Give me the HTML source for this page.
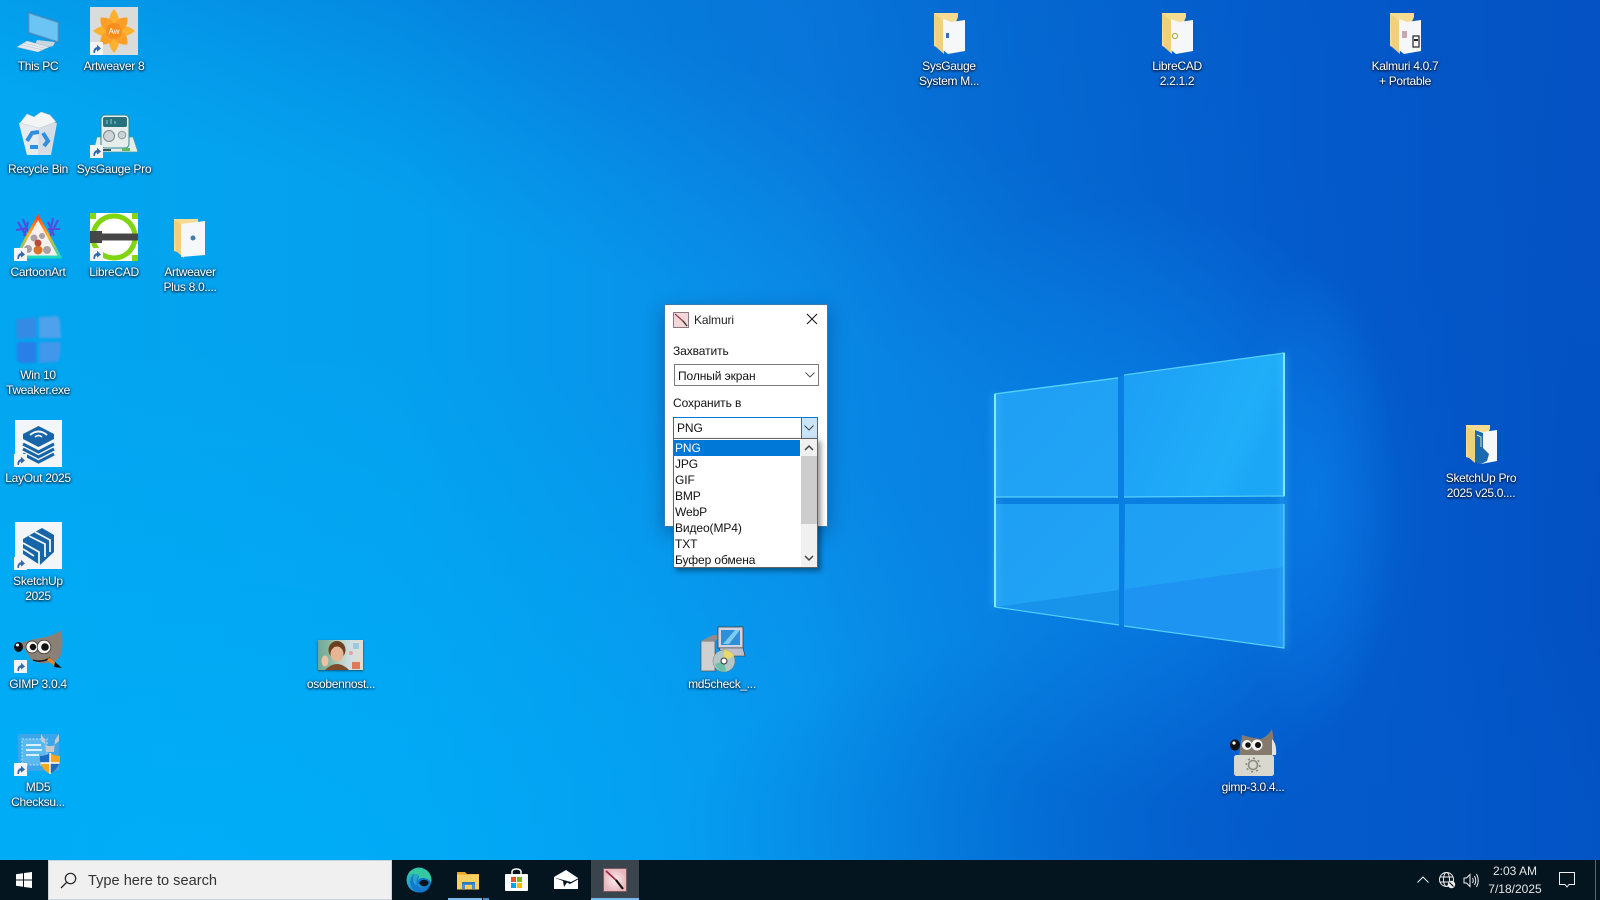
<!DOCTYPE html>
<html lang="en"><head><meta charset="utf-8"><title>Desktop</title>
<style>
*{box-sizing:border-box}
html,body{margin:0;padding:0;width:1600px;height:900px;overflow:hidden;background:#0078d7;font-family:"Liberation Sans","Noto Sans CJK SC",sans-serif;font-size:12px}
.abs{position:absolute}
svg{position:absolute;display:block}
#wp{position:absolute;left:0;top:0;width:1600px;height:900px;background:
radial-gradient(300px 300px at 1130px 500px,rgba(10,146,240,.55),rgba(10,146,240,0)),
radial-gradient(80px 240px at 1315px 500px,rgba(12,132,238,.5),rgba(12,132,238,0)),
radial-gradient(620px 230px at 1300px 830px,rgba(3,88,200,.7),rgba(3,88,200,0)),
radial-gradient(1000px 520px at 200px 860px,rgba(0,176,250,.8),rgba(0,176,250,0)),
linear-gradient(197.7deg,rgba(4,84,196,.5) 0%,rgba(4,84,196,.38) 24%,rgba(4,84,196,.12) 35%,rgba(4,84,196,0) 42%),
linear-gradient(90deg,#03a6f0 0%,#04a0ee 25%,#0a8ce8 50%,#0678dc 63%,#045ecf 82%,#0350c2 100%)}
.l{position:absolute;width:84px;text-align:center;color:#fff;font-size:12px;line-height:15px;letter-spacing:-.3px;text-shadow:0 1px 2px rgba(0,0,0,.95),0 0 3px rgba(0,20,60,.75);white-space:nowrap}
.t{position:absolute;color:#111;font-size:12px;line-height:16px;white-space:nowrap;letter-spacing:-.1px}
</style></head><body>

<!-- wallpaper -->
<div id="wp"></div>
<svg style="left:0;top:0" width="1600" height="900" viewBox="0 0 1600 900">
<defs>
<linearGradient id="p1" x1="0" y1="0" x2="1" y2="1"><stop offset="0" stop-color="#1e9ff4"/><stop offset="1" stop-color="#22a4f6"/></linearGradient>
<linearGradient id="p2" x1="0" y1="0" x2="1" y2="0.4"><stop offset="0" stop-color="#1c9ef5"/><stop offset=".8" stop-color="#20aef8"/><stop offset="1" stop-color="#1ca6f6"/></linearGradient>
<filter id="bl3" filterUnits="userSpaceOnUse" x="900" y="300" width="500" height="400"><feGaussianBlur stdDeviation="4"/></filter>
</defs>
<polygon points="995,393 1118,377 1124,375 1284,353 1284,648 1124,626 1119,625 995,607" fill="#0a7fe2"/>
<polygon points="995,393 1118,377 1118,497 995,497" fill="url(#p1)"/>
<polygon points="1124,375 1284,353 1284,496 1124,497" fill="url(#p2)"/>
<polygon points="995,504 1119,504 1119,625 995,607" fill="url(#p1)"/>
<polygon points="1125,504 1284,504 1284,648 1124,626" fill="url(#p1)"/>
<polygon points="995,607 1119,590 1119,625" fill="#1790e8" opacity=".8"/>
<polygon points="1125,589 1284,567 1284,648 1124,626" fill="#1e8ff0" opacity=".75"/>
<g fill="none" stroke="#6fe4fa" stroke-width="3" opacity=".45" filter="url(#bl3)"><line x1="1284" y1="353" x2="1284" y2="648"/><line x1="995" y1="394" x2="995" y2="607"/></g>
<g fill="none" stroke="#62dcf8" stroke-width="1.2" opacity=".85">
<polyline points="1118,378 995,394 995,497 1118,497"/>
<polyline points="995,504 995,607 1119,625"/>
<polyline points="1124,375 1284,353 1284,496 1124,497"/>
<polyline points="1284,504 1284,648 1124,626"/>
</g>
<g fill="none" stroke="#80eafc" stroke-width="2"><line x1="1284" y1="353" x2="1284" y2="496"/><line x1="995" y1="394" x2="995" y2="607"/></g>
</svg>

<!-- This PC -->
<svg style="left:16px;top:10px" width="46" height="46" viewBox="0 0 46 46">
<polygon points="21,30 39,32 37,36 28,38 19,35" fill="#c9d5df"/>
<polygon points="12,2 43,12 43,33 12,23" fill="#4f9ed4" stroke="#3a80b8" stroke-width=".8"/>
<polygon points="13.5,4 41.5,13 41.5,31 13.5,22" fill="#6cc4f4"/>
<polygon points="1,37 11,31 33,37 22,42" fill="#e4ebf0" stroke="#aebcc8" stroke-width=".5"/>
<g stroke="#b0bec8" stroke-width=".5"><line x1="5" y1="35" x2="27" y2="40"/><line x1="8" y1="33" x2="30" y2="38.5"/></g>
</svg>
<!-- Artweaver 8 -->
<div class="abs" style="left:90px;top:7px;width:48px;height:48px;background:#dadcdb"></div>
<svg style="left:90px;top:7px" width="48" height="48" viewBox="0 0 48 48">
<g fill="#fcb12e"><path d="M24 2 Q34 14 24 24 Q14 14 24 2Z"/><path d="M24 46 Q34 34 24 24 Q14 34 24 46Z"/><path d="M3 24 Q15 14 24 24 Q15 34 3 24Z"/><path d="M45 24 Q33 14 24 24 Q33 34 45 24Z"/></g>
<g fill="#fb9f26" transform="rotate(45 24 24)"><path d="M24 5 Q35 14 24 24 Q13 14 24 5Z"/><path d="M24 43 Q35 34 24 24 Q13 34 24 43Z"/><path d="M5 24 Q14 13 24 24 Q14 35 5 24Z"/><path d="M43 24 Q34 13 24 24 Q34 35 43 24Z"/></g>
<circle cx="24" cy="24" r="8" fill="#f98e20"/>
<text x="24" y="27" font-size="8" text-anchor="middle" fill="#fff" font-family="Liberation Sans">Aw</text>
</svg>
<!-- Recycle bin -->
<svg style="left:17px;top:111px" width="42" height="46" viewBox="0 0 42 46">
<polygon points="2,12 40,12 34,44 10,44" fill="#d6dde4"/>
<polygon points="2,12 22,16 21,44 10,44" fill="#e6ebf0"/>
<path d="M3 12 L10 3 L17 6 L24 1 L33 4 L39 11 L22 17 Z" fill="#f2f4f6" stroke="#c4ced6" stroke-width=".5"/>
<g fill="none" stroke="#2f8ee2" stroke-width="4"><path d="M10 30 L15 22 L22 21"/><path d="M26 22 L31 30 L27 35"/><path d="M21 36 L13 36"/></g>
</svg>
<!-- SysGauge -->
<svg style="left:92px;top:113px" width="46" height="44" viewBox="0 0 46 44">
<polygon points="5,24 41,24 46,39 1,39" fill="#e4ecec" stroke="#4a9a9a" stroke-width=".7"/>
<rect x="9" y="2" width="28" height="33" rx="4" fill="#e6eded" stroke="#2f8a92"/>
<rect x="11" y="4" width="24" height="10" rx="2" fill="#27707c"/>
<g stroke="#7fd0d0"><line x1="15" y1="11" x2="15" y2="7"/><line x1="19" y1="11" x2="19" y2="6"/><line x1="23" y1="11" x2="23" y2="8"/></g>
<circle cx="17" cy="23" r="5.5" fill="#ccd4d6" stroke="#7a8a8c"/><circle cx="30" cy="22" r="3.8" fill="#c8d2d2" stroke="#8a9a9a"/>
<rect x="30" y="35" width="8" height="3" fill="#5cb85c"/><rect x="10" y="36" width="9" height="2" fill="#2f5a60"/>
</svg>
<!-- CartoonArt -->
<svg style="left:14px;top:214px" width="48" height="46" viewBox="0 0 48 46">
<defs><linearGradient id="rb" x1="0" y1="0" x2="0" y2="1"><stop offset="0" stop-color="#ff4a1a"/><stop offset=".45" stop-color="#ffb320"/><stop offset="1" stop-color="#1ed8c0"/></linearGradient></defs>
<g fill="none" stroke="#6a34d8" stroke-width="2" opacity=".8"><path d="M4 8 L12 22 M9 5 L14 18 M14 8 L10 22 M2 16 L14 14"/><path d="M44 6 L36 22 M39 4 L36 18 M34 8 L40 22 M46 15 L34 15"/></g>
<polygon points="24,3 46,43 2,43" fill="#f7f1ee"/>
<polygon points="24,3 46,43 2,43" fill="none" stroke="url(#rb)" stroke-width="3"/>
<g fill="#7a6a76" opacity=".6"><circle cx="20" cy="24" r="3.5"/><circle cx="28" cy="22" r="3"/><circle cx="14" cy="35" r="4"/><circle cx="33" cy="36" r="4"/></g><circle cx="24" cy="36" r="4.5" fill="#d8742a"/><circle cx="24" cy="29" r="3.5" fill="#b84a3a"/>
</svg>
<!-- LibreCAD -->
<div class="abs" style="left:90px;top:213px;width:48px;height:48px;background:#fff"></div>
<svg style="left:90px;top:213px" width="48" height="48" viewBox="0 0 48 48">
<g fill="#86d612"><rect width="6" height="6"/><rect x="42" width="6" height="6"/><rect y="42" width="6" height="6"/><rect x="42" y="42" width="6" height="6"/></g>
<circle cx="24" cy="24" r="21" fill="none" stroke="#7fd60e" stroke-width="5"/>
<rect x="0" y="18" width="12" height="12" fill="#474747"/><rect x="12" y="20.5" width="36" height="7" fill="#474747"/>
</svg>
<!-- Win 10 Tweaker -->
<svg style="left:14px;top:316px;filter:blur(1px)" width="48" height="48" viewBox="0 0 48 48">
<g opacity=".85"><path d="M2 6 Q2 3 6 3 L22 1 V22 L3 23Z" fill="#3c86e4"/><path d="M25 1 L42 0 Q46 1 46 6 L47 22 H25Z" fill="#5ca2ea"/><path d="M3 26 H22 V47 L7 47 Q3 46 3 41Z" fill="#2f78e6"/><path d="M25 26 H47 L46 41 Q45 45 41 46 L25 47Z" fill="#4c94ea"/></g>
</svg>
<!-- LayOut -->
<div class="abs" style="left:15px;top:420px;width:47px;height:47px;background:#f3f6f9"></div>
<svg style="left:15px;top:420px" width="47" height="47" viewBox="0 0 47 47">
<g fill="none" stroke="#1565a8" stroke-width="3"><path d="M8 24 L23.5 32 L39 24"/><path d="M8 29 L23.5 37 L39 29"/><path d="M8 34 L23.5 42 L39 34"/></g>
<path d="M23.5 6 L39 14 V19 L23.5 27 L8 19 V14Z" fill="#1565a8"/>
<path d="M15 15 Q23.5 8 32 15" fill="none" stroke="#f3f6f9" stroke-width="2"/><path d="M20 17 Q23.5 14 27 17" fill="none" stroke="#f3f6f9" stroke-width="1.8"/>
</svg>
<!-- SketchUp -->
<div class="abs" style="left:15px;top:522px;width:47px;height:47px;background:#f3f6f9"></div>
<svg style="left:15px;top:522px" width="47" height="47" viewBox="0 0 47 47">
<path d="M27 6 L39 13 V30 L25 43 L8 32 V17Z" fill="#1565a8"/>
<g fill="none" stroke="#f3f6f9" stroke-width="1.8"><path d="M8 21 L24 30 V43"/><path d="M8 27 L19 34"/><path d="M14 14 L30 22 V35"/><path d="M20 10 L35 18 V30"/></g>
</svg>
<!-- GIMP -->
<svg style="left:14px;top:628px" width="50" height="46" viewBox="0 0 50 46">
<path d="M7 15 L20 11 Q38 9 47 2 Q50 14 47 26 Q44 34 38 34 Q24 38 16 30 Z" fill="#8b8076"/>
<path d="M19 32 Q28 35 36 30" fill="none" stroke="#111" stroke-width="1.4"/>
<path d="M34 31 L42 37" stroke="#e8872a" stroke-width="3"/><polygon points="41,34 48,40 40,39" fill="#111"/>
<ellipse cx="4.5" cy="19" rx="4.5" ry="5" fill="#111"/><circle cx="3.5" cy="17" r="1.5" fill="#fff"/>
<circle cx="18" cy="19" r="6" fill="#f3f3ef" stroke="#222" stroke-width=".7"/><circle cx="19" cy="19" r="3.2" fill="#111"/>
<circle cx="30" cy="19" r="6.8" fill="#f3f3ef" stroke="#222" stroke-width=".7"/><circle cx="31" cy="19" r="3.8" fill="#111"/>
</svg>
<!-- MD5 checksum -->
<svg style="left:17px;top:733px" width="46" height="46" viewBox="0 0 46 46">
<rect x="1" y="1" width="41" height="37" rx="2" fill="#3ca6ea"/>
<rect x="5" y="6" width="25" height="26" fill="#5ab9ef" stroke="#b8e2f8" stroke-dasharray="2 1.5"/>
<g stroke="#d8f0fc" stroke-width="2"><line x1="9" y1="12" x2="24" y2="12"/><line x1="9" y1="17" x2="25" y2="17"/><line x1="9" y1="22" x2="22" y2="22"/></g>
<path d="M24 1 L28 7 L29 19 L37 19 L38 7 L42 1 L42 8 L36 13 H31 L24 8Z" fill="#c6cacd"/>
<path d="M33 20 Q38 23 43 23 Q44 35 33 41 Q22 35 23 23 Q28 23 33 20Z" fill="#f5a81c"/>
<path d="M33 20 Q28 23 23 23 Q22.5 27 23.5 30 H33Z" fill="#1c6cc4"/><path d="M33 30 H42.5 Q40 37 33 41Z" fill="#1c6cc4"/>
<g stroke="#fff" stroke-width="1.4"><line x1="33" y1="20" x2="33" y2="41"/><line x1="23.5" y1="30" x2="42.5" y2="30"/></g>
</svg>
<!-- osobennosti image -->
<div class="abs" style="left:318px;top:640px;width:45px;height:30px;background:linear-gradient(90deg,#6fa89a 0%,#8ab7a0 25%,#bcd2c8 50%,#cfe0e4 75%,#e6dccc 100%);box-shadow:0 1px 2px rgba(0,0,0,.5)"></div>
<svg style="left:318px;top:640px" width="45" height="30" viewBox="0 0 45 30">
<ellipse cx="19" cy="10" rx="8.5" ry="9" fill="#6a4020"/><ellipse cx="19" cy="14" rx="6.5" ry="7.5" fill="#e6b596"/><path d="M7 30 Q19 18 31 30Z" fill="#7d4a2c"/><ellipse cx="7" cy="21" rx="3.5" ry="5.5" fill="#eec0a4"/>
<rect x="34" y="22" width="8" height="7" fill="#e07a5a"/><rect x="35" y="3" width="6" height="6" fill="#9ccbe0"/><circle cx="33" cy="13" r="2" fill="#e8a0a0"/>
</svg>
<!-- md5check installer -->
<svg style="left:699px;top:624px" width="48" height="50" viewBox="0 0 48 50">
<rect x="2" y="17" width="14" height="30" fill="#d0d0d0" stroke="#555" stroke-width=".7"/><polygon points="2,17 14,11 24,11 16,17" fill="#8c8c8c"/>
<rect x="19" y="3" width="25" height="21" fill="#cfd3e2" stroke="#333" stroke-width=".7"/><rect x="22" y="6" width="19" height="15" fill="#2e8ed6"/><polygon points="24,20 36,6 41,6 30,20" fill="#7ccbf0"/>
<polygon points="20,24 44,24 46,32 24,32" fill="#bcc0cc" stroke="#333" stroke-width=".6"/>
<circle cx="25" cy="37" r="11" fill="#b4c6c6" stroke="#777" stroke-width=".5"/><path d="M25 26 A11 11 0 0 1 35 32 L25 37Z" fill="#e8da6a"/><path d="M16 40 A11 11 0 0 0 27 48 L25 37Z" fill="#6cc0a8"/><circle cx="25" cy="37" r="3" fill="#fff" stroke="#333"/>
</svg>
<!-- gimp installer -->
<svg style="left:1228px;top:728px" width="50" height="50" viewBox="0 0 50 50">
<path d="M11 28 L14 7 Q24 10 33 11 Q40 8 44 1 Q47 15 44 28Z" fill="#85796e"/><path d="M44 11 Q49 16 48 27 L44 27Z" fill="#e4e4dc"/>
<ellipse cx="7" cy="17" rx="5" ry="5.5" fill="#111"/><circle cx="6" cy="15" r="1.6" fill="#fff"/>
<circle cx="19" cy="17" r="5" fill="#f3f3ef"/><circle cx="20" cy="17" r="2.8" fill="#111"/><circle cx="29" cy="17" r="5.5" fill="#f3f3ef"/><circle cx="30" cy="17" r="3" fill="#111"/>
<rect x="6" y="27" width="40" height="21" rx="2.5" fill="#d8d8cf"/>
<circle cx="25" cy="37" r="4.5" fill="none" stroke="#8a8a80" stroke-width="1.6"/><circle cx="25" cy="37" r="6.8" fill="none" stroke="#8a8a80" stroke-width="1.6" stroke-dasharray="2 3.3"/>
</svg>

<!-- folders -->
<svg style="left:174px;top:218px" width="32" height="41" viewBox="0 0 32 41"><polygon points="0,1 24,1 24,5 10,36 0,33" fill="#f6dc90"/><polygon points="0,2 2,33 10,40 10,8" fill="#f0d07a"/><polygon points="7,6 31,3 31,37 7,39" fill="#f6f7f8"/><circle cx="19" cy="20" r="2.5" fill="#477aa8"/></svg>
<svg style="left:934px;top:12px" width="32" height="43" viewBox="0 0 32 43"><polygon points="0,1 24,1 24,5 10,38 0,34" fill="#f6dc90"/><polygon points="0,2 2,35 10,42 10,9" fill="#f0d07a"/><polygon points="9,7 17,10 31,8 31,39 14,42 9,38" fill="#f6f7f8"/><rect x="12" y="21" width="3" height="5" fill="#3a6ab8"/></svg>
<svg style="left:1162px;top:12px" width="32" height="43" viewBox="0 0 32 43"><polygon points="0,1 24,1 24,5 10,38 0,34" fill="#f6dc90"/><polygon points="0,2 2,35 10,42 10,9" fill="#f0d07a"/><polygon points="9,7 17,10 31,8 31,39 14,42 9,38" fill="#f6f7f8"/><circle cx="13" cy="24" r="2.6" fill="none" stroke="#9aac3a"/></svg>
<svg style="left:1390px;top:12px" width="32" height="43" viewBox="0 0 32 43"><polygon points="0,1 24,1 24,5 10,38 0,34" fill="#f6dc90"/><polygon points="0,2 2,35 10,42 10,9" fill="#f0d07a"/><polygon points="9,7 17,10 31,8 31,39 14,42 9,38" fill="#f6f7f8"/><rect x="12" y="19" width="5" height="7" fill="#c8a8b0"/><rect x="23" y="24" width="6" height="11" fill="#fff" stroke="#222" stroke-width="1.2"/><rect x="24" y="27" width="4" height="2" fill="#222"/></svg>
<svg style="left:1466px;top:424px" width="32" height="41" viewBox="0 0 32 41"><polygon points="0,1 24,1 24,5 9,36 0,33" fill="#f6dc90"/><polygon points="0,2 2,33 9,39 9,8" fill="#f0d07a"/><polygon points="9,6 17,8 31,6 31,37 15,40 9,37" fill="#f6f7f8"/><path d="M9 6 L17 9 V24 L23 30 L21 37 L15 40 L9 37Z" fill="#1a6ab0"/><path d="M11 11 L15 13 V23" fill="none" stroke="#f6dc90"/></svg>

<!-- shortcut arrows -->
<svg width="0" height="0" style="left:0;top:0"><defs><g id="sc"><rect width="13" height="13" fill="#f4f4f4"/><path d="M3.5 11 Q3 6 7 5 V2.8 L11 6.5 L7 9.6 V7.5 Q5 7.8 5 11Z" fill="#2e68b0"/></g></defs></svg>
<svg style="left:90px;top:42px" width="13" height="13"><use href="#sc"/></svg>
<svg style="left:90px;top:145px" width="13" height="13"><use href="#sc"/></svg>
<svg style="left:14px;top:248px" width="13" height="13"><use href="#sc"/></svg>
<svg style="left:90px;top:248px" width="13" height="13"><use href="#sc"/></svg>
<svg style="left:14px;top:454px" width="13" height="13"><use href="#sc"/></svg>
<svg style="left:14px;top:557px" width="13" height="13"><use href="#sc"/></svg>
<svg style="left:14px;top:660px" width="13" height="13"><use href="#sc"/></svg>
<svg style="left:14px;top:763px" width="13" height="13"><use href="#sc"/></svg>

<!-- labels -->
<div class="l" style="left:-4px;top:59px">This PC</div>
<div class="l" style="left:72px;top:59px">Artweaver 8</div>
<div class="l" style="left:-4px;top:162px">Recycle Bin</div>
<div class="l" style="left:72px;top:162px">SysGauge Pro</div>
<div class="l" style="left:-4px;top:265px">CartoonArt</div>
<div class="l" style="left:72px;top:265px">LibreCAD</div>
<div class="l" style="left:148px;top:265px">Artweaver<br>Plus 8.0....</div>
<div class="l" style="left:-4px;top:368px">Win 10<br>Tweaker.exe</div>
<div class="l" style="left:-4px;top:471px">LayOut 2025</div>
<div class="l" style="left:-4px;top:574px">SketchUp<br>2025</div>
<div class="l" style="left:-4px;top:677px">GIMP 3.0.4</div>
<div class="l" style="left:-4px;top:780px">MD5<br>Checksu...</div>
<div class="l" style="left:299px;top:677px">osobennost...</div>
<div class="l" style="left:680px;top:677px">md5check_...</div>
<div class="l" style="left:1211px;top:780px">gimp-3.0.4...</div>
<div class="l" style="left:1439px;top:471px">SketchUp Pro<br>2025 v25.0....</div>
<div class="l" style="left:907px;top:59px">SysGauge<br>System M...</div>
<div class="l" style="left:1135px;top:59px">LibreCAD<br>2.2.1.2</div>
<div class="l" style="left:1363px;top:59px">Kalmuri 4.0.7<br>+ Portable</div>

<!-- dialog -->
<div class="abs" style="left:664px;top:304px;width:164px;height:223px;background:#fff;border:1px solid #3a7ab4;box-shadow:0 6px 18px rgba(0,30,70,.38)"></div>
<svg style="left:673px;top:312px" width="16" height="16" viewBox="0 0 16 16"><rect x=".5" y=".5" width="15" height="15" fill="#f3d6d8" stroke="#8a7a80"/><path d="M2 2 L11 10" stroke="#9a3a4a" stroke-width="1.2"/><path d="M10 9 L14 14" stroke="#333" stroke-width="1.4"/></svg>
<div class="t" style="left:694px;top:312px;color:#222">Kalmuri</div>
<svg style="left:806px;top:313px" width="12" height="12" viewBox="0 0 12 12"><path d="M1 1 L11 11 M11 1 L1 11" stroke="#111" stroke-width="1"/></svg>
<div class="t" style="left:673px;top:343px">Захватить</div>
<div class="abs" style="left:674px;top:364px;width:145px;height:22px;background:#fff;border:1px solid #7a7a7a"></div>
<div class="t" style="left:678px;top:368px">Полный экран</div>
<svg style="left:805px;top:372px" width="10" height="6" viewBox="0 0 10 6"><path d="M.5 .5 L5 5 L9.5 .5" fill="none" stroke="#555"/></svg>
<div class="t" style="left:673px;top:395px">Сохранить в</div>
<div class="abs" style="left:673px;top:417px;width:145px;height:22px;background:#fff;border:1px solid #0078d7"></div>
<div class="abs" style="left:801px;top:417px;width:17px;height:22px;background:#cce4f7;border:1px solid #0078d7"></div>
<div class="t" style="left:677px;top:420px">PNG</div>
<svg style="left:804px;top:425px" width="10" height="6" viewBox="0 0 10 6"><path d="M.5 .5 L5 5 L9.5 .5" fill="none" stroke="#444"/></svg>
<!-- dropdown -->
<div class="abs" style="left:673px;top:438px;width:145px;height:130px;background:#fff;border:1px solid #646464;box-shadow:3px 3px 5px rgba(0,0,0,.4)"></div>
<div class="abs" style="left:674px;top:440px;width:126px;height:16px;background:#0078d7"></div>
<div class="t" style="left:675px;top:440px;color:#fff">PNG</div>
<div class="t" style="left:675px;top:456px">JPG</div>
<div class="t" style="left:675px;top:472px">GIF</div>
<div class="t" style="left:675px;top:488px">BMP</div>
<div class="t" style="left:675px;top:504px">WebP</div>
<div class="t" style="left:675px;top:520px">Видео(MP4)</div>
<div class="t" style="left:675px;top:536px">TXT</div>
<div class="t" style="left:675px;top:552px">Буфер обмена</div>
<div class="abs" style="left:801px;top:439px;width:16px;height:128px;background:#f0f0f0"></div>
<div class="abs" style="left:801px;top:456px;width:16px;height:68px;background:#cdcdcd"></div>
<svg style="left:804px;top:444px" width="10" height="7" viewBox="0 0 10 7"><path d="M1 6 L5 2 L9 6" fill="none" stroke="#444" stroke-width="1.5"/></svg>
<svg style="left:804px;top:555px" width="10" height="7" viewBox="0 0 10 7"><path d="M1 1 L5 5 L9 1" fill="none" stroke="#444" stroke-width="1.5"/></svg>

<!-- taskbar -->
<div class="abs" style="left:0;top:860px;width:1600px;height:40px;background:#04151f"></div>
<svg style="left:16px;top:872px" width="16" height="16" viewBox="0 0 16 16"><g fill="#fff"><polygon points="0,2.2 7,1.2 7,7.5 0,7.5"/><polygon points="8,1 16,0 16,7.5 8,7.5"/><polygon points="0,8.5 7,8.5 7,14.8 0,13.8"/><polygon points="8,8.5 16,8.5 16,16 8,15"/></g></svg>
<div class="abs" style="left:48px;top:860px;width:344px;height:40px;background:#f0f0f0;border:1px solid #c9d4da"></div>
<svg style="left:60px;top:872px" width="17" height="17" viewBox="0 0 17 17"><circle cx="10.5" cy="6.5" r="5.2" fill="none" stroke="#222" stroke-width="1.2"/><line x1="6.8" y1="10.2" x2="1" y2="16" stroke="#222" stroke-width="1.3"/></svg>
<div class="abs" style="left:88px;top:872px;font-size:14.6px;line-height:18px;color:#333;white-space:nowrap">Type here to search</div>

<!-- taskbar active + underlines -->
<div class="abs" style="left:591px;top:860px;width:48px;height:40px;background:#39444c"></div>
<div class="abs" style="left:448px;top:898px;width:34px;height:2px;background:#7ab8ec"></div>
<div class="abs" style="left:483px;top:898px;width:6px;height:2px;background:#4a8cc4"></div>
<div class="abs" style="left:591px;top:898px;width:48px;height:2px;background:#7ab8ec"></div>
<!-- edge -->
<svg style="left:406px;top:867px" width="26" height="26" viewBox="0 0 26 26"><defs><linearGradient id="e1" x1="0" y1="0" x2="1" y2="1"><stop offset="0" stop-color="#33c6a0"/><stop offset=".5" stop-color="#1f9ed8"/><stop offset="1" stop-color="#0f62b8"/></linearGradient></defs><circle cx="13" cy="13" r="12.5" fill="url(#e1)"/><path d="M25.5 14 Q25 8 18 8 Q11 8 10.5 14 Q10 21 18 22 Q21 22.5 23 21 Q19 26 13 25.5 Q5 24 4 15 Q5 9 9 6 Q5 13 9 18" fill="#1478cc"/><path d="M11 16 Q12 10 18 11 Q23 12 25 15 L25.5 13 Q25 3 14 1 Q4 1 1 11 Q3 6 10 7 Q15 8 12 12Z" fill="#35c9a0"/><ellipse cx="18" cy="16" rx="4.6" ry="3.2" fill="#04151f"/></svg>
<!-- explorer -->
<svg style="left:457px;top:871px" width="23" height="19" viewBox="0 0 23 19"><path d="M0 1 H8 L10 3 H22 V4 H0Z" fill="#e8a920"/><rect y="3.5" width="22" height="15" fill="#f9cf60"/><path d="M5 18 V11 H18 V18 H15 V14 H8 V18Z" fill="#4a8ec8"/><rect x="5" y="11" width="13" height="2" fill="#2f78bc"/></svg>
<!-- store -->
<svg style="left:505px;top:868px" width="23" height="24" viewBox="0 0 23 24"><path d="M7 7 V4 Q7 1 11.5 1 Q16 1 16 4 V7" fill="none" stroke="#fff" stroke-width="1.5"/><rect y="6" width="23" height="17" rx="1" fill="#fff"/><rect x="6" y="9" width="5" height="5" fill="#f25022"/><rect x="12" y="9" width="5" height="5" fill="#7fba00"/><rect x="6" y="15" width="5" height="5" fill="#00a4ef"/><rect x="12" y="15" width="5" height="5" fill="#ffb900"/></svg>
<!-- mail -->
<svg style="left:554px;top:870px" width="24" height="20" viewBox="0 0 24 20"><polygon points="12,0 24,8 24,19 0,19 0,7" fill="#fff"/><polygon points="0,7.5 17,12 24,8.5 24,9.5 16,14 13,12.5 10,17 9,11" fill="#04151f"/></svg>
<!-- kalmuri -->
<svg style="left:603px;top:868px" width="24" height="24" viewBox="0 0 24 24"><defs><radialGradient id="k"><stop offset="0" stop-color="#fbeef0"/><stop offset="1" stop-color="#e8b6bc"/></radialGradient></defs><rect x=".5" y=".5" width="23" height="23" fill="url(#k)" stroke="#7a5a62"/><path d="M3 3 L14 13" stroke="#9a2a40" stroke-width="1.8"/><path d="M13 12 L20 21" stroke="#111" stroke-width="2.2"/></svg>

<!-- tray -->
<svg style="left:1417px;top:876px" width="12" height="7" viewBox="0 0 12 7"><path d="M.5 6.5 L6 1 L11.5 6.5" fill="none" stroke="#eee" stroke-width="1"/></svg>
<svg style="left:1439px;top:872px" width="17" height="17" viewBox="0 0 17 17"><g fill="none" stroke="#eee" stroke-width="1"><circle cx="7.5" cy="7.5" r="7"/><ellipse cx="7.5" cy="7.5" rx="3" ry="7"/><line x1=".5" y1="5" x2="14.5" y2="5"/><line x1=".5" y1="10" x2="14.5" y2="10"/></g><circle cx="12.5" cy="12.5" r="3.7" fill="#eee"/><line x1="10.5" y1="10.5" x2="14.5" y2="14.5" stroke="#04151f" stroke-width="1.2"/></svg>
<svg style="left:1463px;top:873px" width="17" height="15" viewBox="0 0 17 15"><path d="M1 5 H3.5 L7 1.5 V13.5 L3.5 10 H1Z" fill="none" stroke="#eee"/><path d="M9.5 5 Q11 7.5 9.5 10 M11.5 3 Q14 7.5 11.5 12 M13.5 1 Q17 7.5 13.5 14" fill="none" stroke="#eee"/></svg>
<div class="abs" style="left:1480px;top:863px;width:70px;text-align:center;color:#e6e6e6;font-size:12px;line-height:16px">2:03 AM</div>
<div class="abs" style="left:1480px;top:881px;width:70px;text-align:center;color:#e6e6e6;font-size:12px;line-height:16px">7/18/2025</div>
<svg style="left:1559px;top:872px" width="16" height="16" viewBox="0 0 16 16"><path d="M.5 .5 H15.5 V12.5 H10 L8 15 L6 12.5 H.5Z" fill="none" stroke="#eee"/></svg>
<div class="abs" style="left:1595px;top:860px;width:1px;height:40px;background:#5a666e"></div>

</body></html>
